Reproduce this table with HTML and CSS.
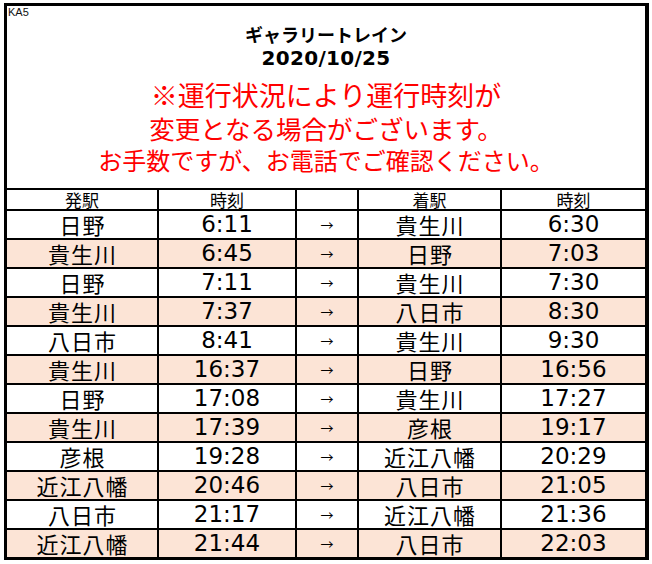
FILE: index.html
```html
<!DOCTYPE html>
<html lang="ja">
<head>
<meta charset="utf-8">
<title>ギャラリートレイン 2020/10/25</title>
<link rel="stylesheet" href="styles.css">
</head>
<body>
<div class="sheet">
  <div class="head">
    <div class="code">KA5</div>
    <div class="title">ギャラリートレイン</div>
    <div class="date">2020/10/25</div>
    <div class="note n1">※運行状況により運行時刻が</div>
    <div class="note n2">変更となる場合がございます。</div>
    <div class="note n3">お手数ですが、お電話でご確認ください。</div>
  </div>
  <div class="grid">
    <div class="c hd">発駅</div><div class="c hd">時刻</div><div class="c hd"></div><div class="c hd">着駅</div><div class="c hd">時刻</div>

    <div class="c st">日野</div><div class="c tm">6:11</div><div class="c ar">→</div><div class="c st">貴生川</div><div class="c tm">6:30</div>
    <div class="c st alt">貴生川</div><div class="c tm alt">6:45</div><div class="c ar alt">→</div><div class="c st alt">日野</div><div class="c tm alt">7:03</div>
    <div class="c st">日野</div><div class="c tm">7:11</div><div class="c ar">→</div><div class="c st">貴生川</div><div class="c tm">7:30</div>
    <div class="c st alt">貴生川</div><div class="c tm alt">7:37</div><div class="c ar alt">→</div><div class="c st alt">八日市</div><div class="c tm alt">8:30</div>
    <div class="c st">八日市</div><div class="c tm">8:41</div><div class="c ar">→</div><div class="c st">貴生川</div><div class="c tm">9:30</div>
    <div class="c st alt">貴生川</div><div class="c tm alt">16:37</div><div class="c ar alt">→</div><div class="c st alt">日野</div><div class="c tm alt">16:56</div>
    <div class="c st">日野</div><div class="c tm">17:08</div><div class="c ar">→</div><div class="c st">貴生川</div><div class="c tm">17:27</div>
    <div class="c st alt">貴生川</div><div class="c tm alt">17:39</div><div class="c ar alt">→</div><div class="c st alt">彦根</div><div class="c tm alt">19:17</div>
    <div class="c st">彦根</div><div class="c tm">19:28</div><div class="c ar">→</div><div class="c st">近江八幡</div><div class="c tm">20:29</div>
    <div class="c st alt">近江八幡</div><div class="c tm alt">20:46</div><div class="c ar alt">→</div><div class="c st alt">八日市</div><div class="c tm alt">21:05</div>
    <div class="c st">八日市</div><div class="c tm">21:17</div><div class="c ar">→</div><div class="c st">近江八幡</div><div class="c tm">21:36</div>
    <div class="c st alt">近江八幡</div><div class="c tm alt">21:44</div><div class="c ar alt">→</div><div class="c st alt">八日市</div><div class="c tm alt">22:03</div>
  </div>
</div>
</body>
</html>
```
FILE: styles.css
```css
html, body {
  margin: 0;
  padding: 0;
  background: #fff;
}

body {
  font-family: "Noto Sans CJK JP", "Noto Sans", sans-serif;
  color: #000;
}

.sheet {
  margin: 3px 0 0 4px;
  width: 638px;
  border: 3px solid #000;
  border-right-width: 4px;
}

.head {
  height: 182px;
  display: flex;
  flex-direction: column;
  align-items: center;
}

.code {
  align-self: flex-start;
  padding-left: 1px;
  font-family: "Liberation Sans", sans-serif;
  font-size: 11px;
  line-height: 13px;
  height: 13px;
  color: #111;
}

.title {
  margin-top: 3px;
  font-size: 18px;
  font-weight: 700;
  line-height: 24px;
}

.date {
  font-family: "DejaVu Sans", sans-serif;
  font-size: 20px;
  font-weight: 700;
  line-height: 24px;
  letter-spacing: 0.3px;
}

.note {
  color: #ff0000;
  white-space: nowrap;
}

.n1 {
  margin-top: 8px;
  font-size: 27px;
  line-height: 33px;
}

.n2 {
  font-size: 25.5px;
  line-height: 33px;
}

.n3 {
  font-size: 24px;
  line-height: 32px;
}

.grid {
  border-top: 2px solid #000;
  display: grid;
  grid-template-columns: 150px 136px 60px 141px 143px;
  grid-template-rows: 19px repeat(12, 27px);
  gap: 2px;
  background: #000;
}

.c {
  background: #fff;
  display: flex;
  align-items: center;
  justify-content: center;
  line-height: 1;
}

.c.alt {
  background: #fce4d6;
}

.hd {
  font-size: 17px;
  padding-bottom: 1px;
}

.st {
  font-size: 22px;
  letter-spacing: 1px;
  text-indent: 1px;
  padding-bottom: 2px;
}

.tm {
  font-family: "DejaVu Sans", sans-serif;
  font-size: 23px;
}

.ar {
  font-size: 13px;
}
```
